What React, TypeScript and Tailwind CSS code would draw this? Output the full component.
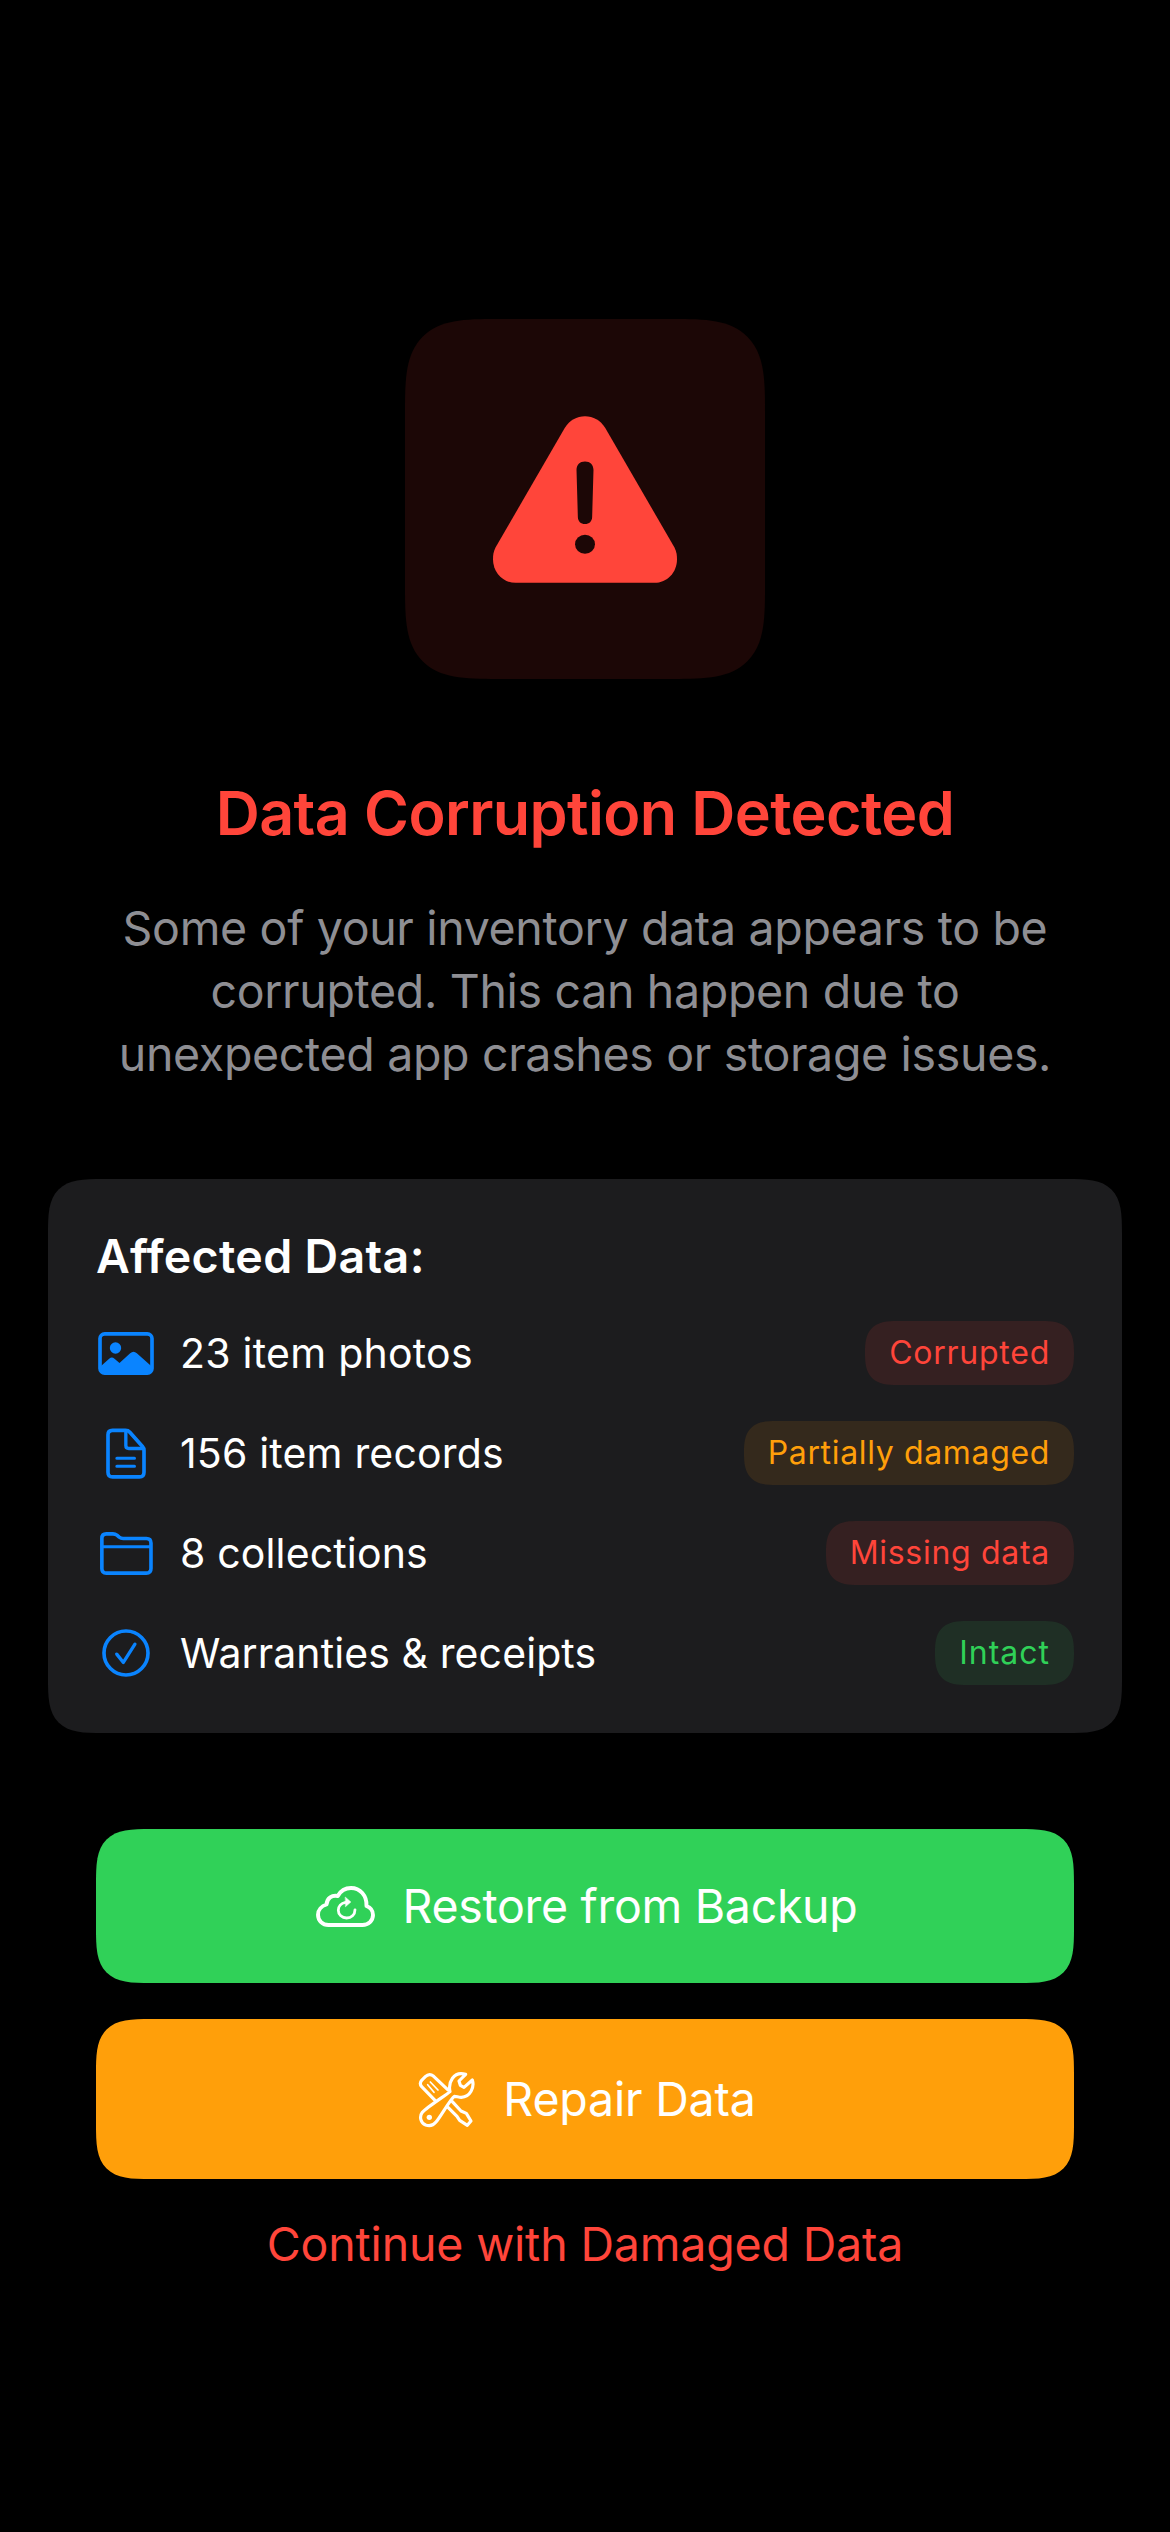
import type { ReactNode } from "react";

function WarningIcon() {
  return (
    <svg className="h-[167px] w-[184px]" viewBox="309 348 553 501" aria-hidden="true">
      <path
        className="fill-[#ff453a]"
        d="M585.5 348C610 348 632 360 646 383L854 742C861 755 862 768 862 778C862 818 832 849 794 849H377C339 849 309 818 309 778C309 768 310 755 317 742L525 383C539 360 561 348 585.5 348Z"
      />
      <path
        className="fill-[#1c0706]"
        d="M585.5 484C601 484 611 494 611 510L607 650C607 664 598 672 585.5 672C573 672 564 664 564 650L560 510C560 494 570 484 585.5 484Z"
      />
      <ellipse className="fill-[#1c0706]" cx="585.5" cy="733" rx="30" ry="28.5" />
    </svg>
  );
}

function PhotoIcon() {
  return (
    <svg className="h-[43px] w-[56px]" viewBox="24 36 167 129" aria-hidden="true">
      <rect x="29.5" y="41.5" width="156" height="118" rx="14" fill="none" stroke="currentColor" strokeWidth="11" />
      <path fill="currentColor" d="M30 140L57 116Q65 109 73 116L88 129L120 100Q130 91 140 100L183 138V160H32Z" />
      <circle cx="76" cy="84" r="17" fill="currentColor" />
    </svg>
  );
}

function DocumentIcon() {
  return (
    <svg className="h-[51px] w-[40px]" viewBox="47.5 40 120 152" fill="none" stroke="currentColor" strokeWidth="11" strokeLinecap="round" strokeLinejoin="round" aria-hidden="true">
      <path d="M106 46.5H67Q53.5 46.5 53.5 60V172Q53.5 186 67 186H148Q161.500 186 161.500 172V106Q161.500 100 157 95L119 52Q114 46.500 106 46.500Z" />
      <path d="M107 48V92Q107 101 116 101H160" strokeWidth="10" />
      <path d="M80 130H133M80 154.500H133" strokeWidth="9" />
    </svg>
  );
}

function FolderIcon() {
  return (
    <svg className="h-[43px] w-[53px]" viewBox="27 350.500 160 130" fill="none" stroke="currentColor" strokeWidth="11" strokeLinejoin="round" aria-hidden="true">
      <path d="M32.500 370Q32.500 356 46 356H66Q73 356 78 360L85 366Q90 370 97 370H167Q181 370 181 384V461Q181 475 167 475H46Q32.500 475 32.500 461Z" />
      <path d="M33 395H181" strokeWidth="9" />
    </svg>
  );
}

function CheckIcon() {
  return (
    <svg className="size-[48px]" viewBox="36 642 144 145" fill="none" stroke="currentColor" strokeWidth="11" strokeLinecap="round" strokeLinejoin="round" aria-hidden="true">
      <circle cx="108" cy="714.5" r="66.5" />
      <path d="M80 718L100 743L135 688" strokeWidth="10" />
    </svg>
  );
}

function CloudRestoreIcon() {
  return (
    <svg className="h-[43px] w-[60px]" viewBox="0 0 60 43" fill="none" stroke="currentColor" strokeLinecap="round" strokeLinejoin="round" aria-hidden="true">
      <path
        strokeWidth="3.9"
        d="M13.500 40H47.500C53.500 40 58 35.500 58 30C58 25.500 55.500 22.500 51.500 21C52 10.500 45 3 36 3C30 3 25.500 6 22.800 11C17 9.800 12 13 11.500 19.500C6.500 21 3 25 3 29.700C3 35.500 7.500 40 13.500 40Z"
      />
      <path strokeWidth="2.8" d="M30.500 17.400C26 18.200 23.300 21.500 23.300 25.300C23.300 29.800 27 33 31.600 33C36.300 33 40 29.800 40 24.800" />
      <path fill="currentColor" strokeWidth="0.6" d="M30.500 12.300L35.800 17L30.700 21.500Z" />
    </svg>
  );
}

function ToolsIcon() {
  return (
    <svg className="h-[59px] w-[60px]" viewBox="51 60 180 177" fill="none" stroke="currentColor" strokeWidth="9.500" strokeLinecap="round" strokeLinejoin="round" aria-hidden="true">
      <path d="M143 119L101 79Q88 68 76 80L65 91Q57 100 65 110L105 151" />
      <path d="M83 104L102 127M91 96L114 120" strokeWidth="5" />
      <path d="M157 155L183 183L199 190L213 213L202 226L179 211L171 199L144 172" />
      <path d="M197 73L177 93L181 106L192 112L217 90C224 112 211 141 184 142C176 142 169 139 163 139C153 144 122 200 108 216C100 226 88 229 77 225C62 219 57 200 67 187C82 171 140 134 150 125C144 98 160 62 197 73Z" />
      <circle cx="88" cy="202" r="8" fill="currentColor" stroke="none" />
    </svg>
  );
}

type Row = { icon: ReactNode; label: string; status: string; labelTracking: string; badge: string };

const rows: Row[] = [
  {
    icon: <PhotoIcon />,
    label: "23 item photos",
    status: "Corrupted",
    labelTracking: "tracking-[0.25px]",
    badge: "bg-[#352021] text-[#ff453a] tracking-[0.75px]",
  },
  {
    icon: <DocumentIcon />,
    label: "156 item records",
    status: "Partially damaged",
    labelTracking: "tracking-[0.17px]",
    badge: "bg-[#34291c] text-[#ff9f0a] tracking-[0.65px]",
  },
  {
    icon: <FolderIcon />,
    label: "8 collections",
    status: "Missing data",
    labelTracking: "tracking-[0.15px]",
    badge: "bg-[#352021] text-[#ff453a] tracking-[0.7px]",
  },
  {
    icon: <CheckIcon />,
    label: "Warranties & receipts",
    status: "Intact",
    labelTracking: "tracking-[0.1px]",
    badge: "bg-[#1f2f25] text-[#30d158] tracking-[1px]",
  },
];

export default function App() {
  return (
    <main className="flex h-[2532px] w-[1170px] flex-col items-center bg-black px-12 pt-[319px] font-['Inter',sans-serif] antialiased">
      <div className="flex size-[360px] shrink-0 items-center justify-center rounded-[92px] bg-[#1c0706] [corner-shape:superellipse(1.7)]">
        <WarningIcon />
      </div>

      <h1 className="mt-[98px] text-[61px] leading-[72px] font-semibold tracking-[-0.6px] whitespace-nowrap text-[#ff453a]">
        Data Corruption Detected
      </h1>
      <p className="mt-12 text-center text-[46.5px] leading-[63px] tracking-[-0.33px] whitespace-nowrap text-[#8e8e93]">
        Some of your inventory data appears to be
        <br />
        corrupted. This can happen due to
        <br />
        unexpected app crashes or storage issues.
      </p>

      <section className="mt-[93px] flex w-full flex-col gap-9 rounded-[55px] bg-[#1c1c1e] p-12 [corner-shape:superellipse(1.7)]">
        <h2 className="text-[46.5px] leading-[58px] font-semibold tracking-[0.35px] text-white">Affected Data:</h2>
        {rows.map((row) => (
          <div key={row.label} className="flex h-16 items-center">
            <span className="flex w-[60px] justify-center text-[#0a84ff]">{row.icon}</span>
            <span className={`ml-6 text-[41px] leading-[50px] text-white ${row.labelTracking}`}>{row.label}</span>
            <span
              className={`ml-auto flex h-16 items-center rounded-[32px] px-6 text-[32px] leading-10 [corner-shape:superellipse(1.48)] ${row.badge}`}
            >
              {row.status}
            </span>
          </div>
        ))}
      </section>

      <div className="mt-24 flex w-full flex-col px-12">
        <button className="flex h-[154px] items-center justify-center gap-7 rounded-[55px] bg-[#30d158] pl-[2px] text-[46.5px] leading-[60px] tracking-[-0.3px] text-white [corner-shape:superellipse(1.7)]">
          <CloudRestoreIcon />
          Restore from Backup
        </button>
        <button className="mt-9 flex h-[160px] items-center justify-center gap-[26px] rounded-[55px] bg-[#ff9f0a] pl-[3px] text-[46.5px] leading-[60px] tracking-[-0.2px] text-white [corner-shape:superellipse(1.7)]">
          <ToolsIcon />
          Repair Data
        </button>
        <button className="mt-[35px] text-[46.5px] leading-[60px] tracking-[-0.17px] text-[#ff453a]">
          Continue with Damaged Data
        </button>
      </div>
    </main>
  );
}
